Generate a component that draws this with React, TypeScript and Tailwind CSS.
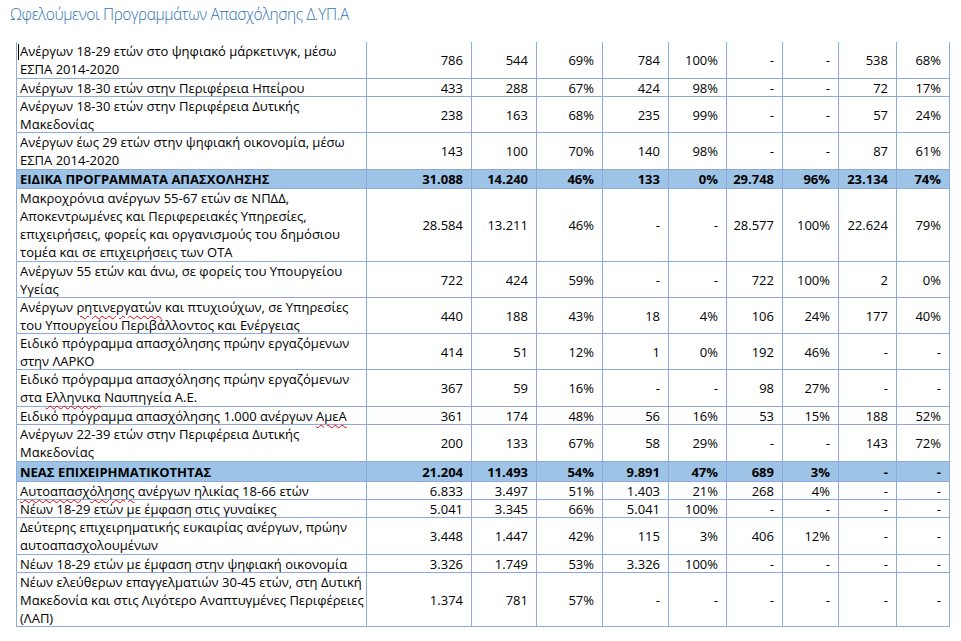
import React from 'react';

type Row = {
  h: string;
  label: React.ReactNode[];
  vals: string[];
  head?: boolean;
};

const Sp = ({ children }: { children: React.ReactNode }) => (
  <span className="underline decoration-wavy decoration-red-600 decoration-1 underline-offset-[3px]">{children}</span>
);

const rows: Row[] = [
  { h: 'h-[37px]', label: ['Ανέργων 18-29 ετών στο ψηφιακό μάρκετινγκ, μέσω', 'ΕΣΠΑ 2014-2020'], vals: ['786', '544', '69%', '784', '100%', '-', '-', '538', '68%'] },
  { h: 'h-[18px]', label: ['Ανέργων 18-30 ετών στην Περιφέρεια Ηπείρου'], vals: ['433', '288', '67%', '424', '98%', '-', '-', '72', '17%'] },
  { h: 'h-[36px]', label: ['Ανέργων 18-30 ετών στην Περιφέρεια Δυτικής', 'Μακεδονίας'], vals: ['238', '163', '68%', '235', '99%', '-', '-', '57', '24%'] },
  { h: 'h-[37px]', label: ['Ανέργων έως 29 ετών στην ψηφιακή οικονομία, μέσω', 'ΕΣΠΑ 2014-2020'], vals: ['143', '100', '70%', '140', '98%', '-', '-', '87', '61%'] },
  { h: 'h-[19px]', head: true, label: ['ΕΙΔΙΚΑ ΠΡΟΓΡΑΜΜΑΤΑ ΑΠΑΣΧΟΛΗΣΗΣ'], vals: ['31.088', '14.240', '46%', '133', '0%', '29.748', '96%', '23.134', '74%'] },
  {
    h: 'h-[73px]',
    label: [
      'Μακροχρόνια ανέργων 55-67 ετών σε ΝΠΔΔ,',
      'Αποκεντρωμένες και Περιφερειακές Υπηρεσίες,',
      'επιχειρήσεις, φορείς και οργανισμούς του δημόσιου',
      'τομέα και σε επιχειρήσεις των ΟΤΑ',
    ],
    vals: ['28.584', '13.211', '46%', '-', '-', '28.577', '100%', '22.624', '79%'],
  },
  { h: 'h-[36px]', label: ['Ανέργων 55 ετών και άνω, σε φορείς του Υπουργείου', 'Υγείας'], vals: ['722', '424', '59%', '-', '-', '722', '100%', '2', '0%'] },
  {
    h: 'h-[36px]',
    label: [
      <>Ανέργων <Sp>ρητινεργατών</Sp> και πτυχιούχων, σε Υπηρεσίες</>,
      'του Υπουργείου Περιβάλλοντος και Ενέργειας',
    ],
    vals: ['440', '188', '43%', '18', '4%', '106', '24%', '177', '40%'],
  },
  { h: 'h-[36px]', label: ['Ειδικό πρόγραμμα απασχόλησης πρώην εργαζόμενων', 'στην ΛΑΡΚΟ'], vals: ['414', '51', '12%', '1', '0%', '192', '46%', '-', '-'] },
  {
    h: 'h-[37px]',
    label: ['Ειδικό πρόγραμμα απασχόλησης πρώην εργαζόμενων', <>στα <Sp>Ελληνικα</Sp> Ναυπηγεία Α.Ε.</>],
    vals: ['367', '59', '16%', '-', '-', '98', '27%', '-', '-'],
  },
  { h: 'h-[18px]', label: [<>Ειδικό πρόγραμμα απασχόλησης 1.000 ανέργων <Sp>ΑμεΑ</Sp></>], vals: ['361', '174', '48%', '56', '16%', '53', '15%', '188', '52%'] },
  { h: 'h-[37px]', label: ['Ανέργων 22-39 ετών στην Περιφέρεια Δυτικής', 'Μακεδονίας'], vals: ['200', '133', '67%', '58', '29%', '-', '-', '143', '72%'] },
  { h: 'h-[20px]', head: true, label: ['ΝΕΑΣ ΕΠΙΧΕΙΡΗΜΑΤΙΚΟΤΗΤΑΣ'], vals: ['21.204', '11.493', '54%', '9.891', '47%', '689', '3%', '-', '-'] },
  { h: 'h-[18px]', label: [<><Sp>Αυτοαπασχόλησης</Sp> ανέργων ηλικίας 18-66 ετών</>], vals: ['6.833', '3.497', '51%', '1.403', '21%', '268', '4%', '-', '-'] },
  { h: 'h-[18px]', label: ['Νέων 18-29 ετών με έμφαση στις γυναίκες'], vals: ['5.041', '3.345', '66%', '5.041', '100%', '-', '-', '-', '-'] },
  { h: 'h-[37px]', label: ['Δεύτερης επιχειρηματικής ευκαιρίας ανέργων, πρώην', 'αυτοαπασχολουμένων'], vals: ['3.448', '1.447', '42%', '115', '3%', '406', '12%', '-', '-'] },
  { h: 'h-[18px]', label: ['Νέων 18-29 ετών με έμφαση στην ψηφιακή οικονομία'], vals: ['3.326', '1.749', '53%', '3.326', '100%', '-', '-', '-', '-'] },
  {
    h: 'h-[54px]',
    label: [
      'Νέων ελεύθερων επαγγελματιών 30-45 ετών, στη Δυτική',
      'Μακεδονία και στις Λιγότερο Αναπτυγμένες Περιφέρειες',
      '(ΛΑΠ)',
    ],
    vals: ['1.374', '781', '57%', '-', '-', '-', '-', '-', '-'],
  },
];

const App: React.FC = () => {
  return (
    <div className="w-[961px] h-[641px] bg-white overflow-hidden font-['Open_Sans','Liberation_Sans',sans-serif] text-black">
      <div className="h-[42px] pl-[10px] pt-[2px] text-[15.5px] tracking-[-0.4px] font-light text-[#2e74b5] leading-[24px]">
        Ωφελούμενοι Προγραμμάτων Απασχόλησης Δ.ΥΠ.Α
      </div>
      <div className="ml-[16px] grid grid-cols-[351px_105px_65px_66px_66px_58px_56px_56px_58px_53px] text-[13px] leading-[18px]">
        {rows.map((r, i) => (
          <React.Fragment key={i}>
            <div
              className={`${r.h} relative flex items-center border-l border-r border-b border-[#8eaadb] pl-[3px] whitespace-nowrap ${
                r.head ? 'bg-[#9dc3e6] font-bold' : ''
              }`}
            >
              {i === 0 && <span className="absolute left-[1px] top-[2px] w-px h-[16px] bg-black" />}
              <div>
                {r.label.map((l, j) => (
                  <div key={j}>{l}</div>
                ))}
              </div>
            </div>
            {r.vals.map((v, j) => (
              <div
                key={j}
                className={`${r.h} flex items-center justify-end border-r border-b border-[#8eaadb] pr-[8px] whitespace-nowrap ${
                  r.head ? 'bg-[#9dc3e6] font-bold' : ''
                }`}
              >
                {v}
              </div>
            ))}
          </React.Fragment>
        ))}
      </div>
    </div>
  );
};

export default App;
